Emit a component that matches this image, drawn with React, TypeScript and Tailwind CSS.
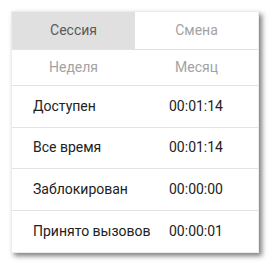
import React, { useState } from "react";

const tabs = [
  ["Сессия", "Смена"],
  ["Неделя", "Месяц"],
];

const rows = [
  { label: "Доступен", value: "00:01:14" },
  { label: "Все время", value: "00:01:14" },
  { label: "Заблокирован", value: "00:00:00" },
  { label: "Принято вызовов", value: "00:00:01" },
];

export default function App() {
  const [active, setActive] = useState("Сессия");

  return (
    <div className="w-[270px] h-[264px] bg-white pt-[11px] pl-[11px]" style={{ fontFamily: "Roboto, 'Liberation Sans', sans-serif" }}>
      <div className="w-[248px] h-[242px] bg-white border border-[#ececec] shadow-[3px_3px_5px_rgba(0,0,0,0.5)] flex flex-col">
        {tabs.map((pair, i) => (
          <div key={i} className={`grid grid-cols-2 border-b border-[#e3e3e3] ${i === 0 ? "h-[38px]" : "h-[37px]"}`}>
            {pair.map((t) => (
              <button
                key={t}
                onClick={() => setActive(t)}
                className={
                  active === t
                    ? "flex items-center justify-center text-[14px] bg-[#e0e0e0] text-[#5a5a5a]"
                    : "flex items-center justify-center text-[14px] bg-white text-[#a3a3a3]"
                }
              >
                {t}
              </button>
            ))}
          </div>
        ))}
        {rows.map((r, i) => (
          <div
            key={r.label}
            className={`grid grid-cols-[157px_1fr] items-center h-[42px] text-[14px] text-[#222] ${i < rows.length - 1 ? "border-b border-[#e3e3e3]" : ""}`}
          >
            <span className="pl-[21px]">{r.label}</span>
            <span>{r.value}</span>
          </div>
        ))}
      </div>
    </div>
  );
}
